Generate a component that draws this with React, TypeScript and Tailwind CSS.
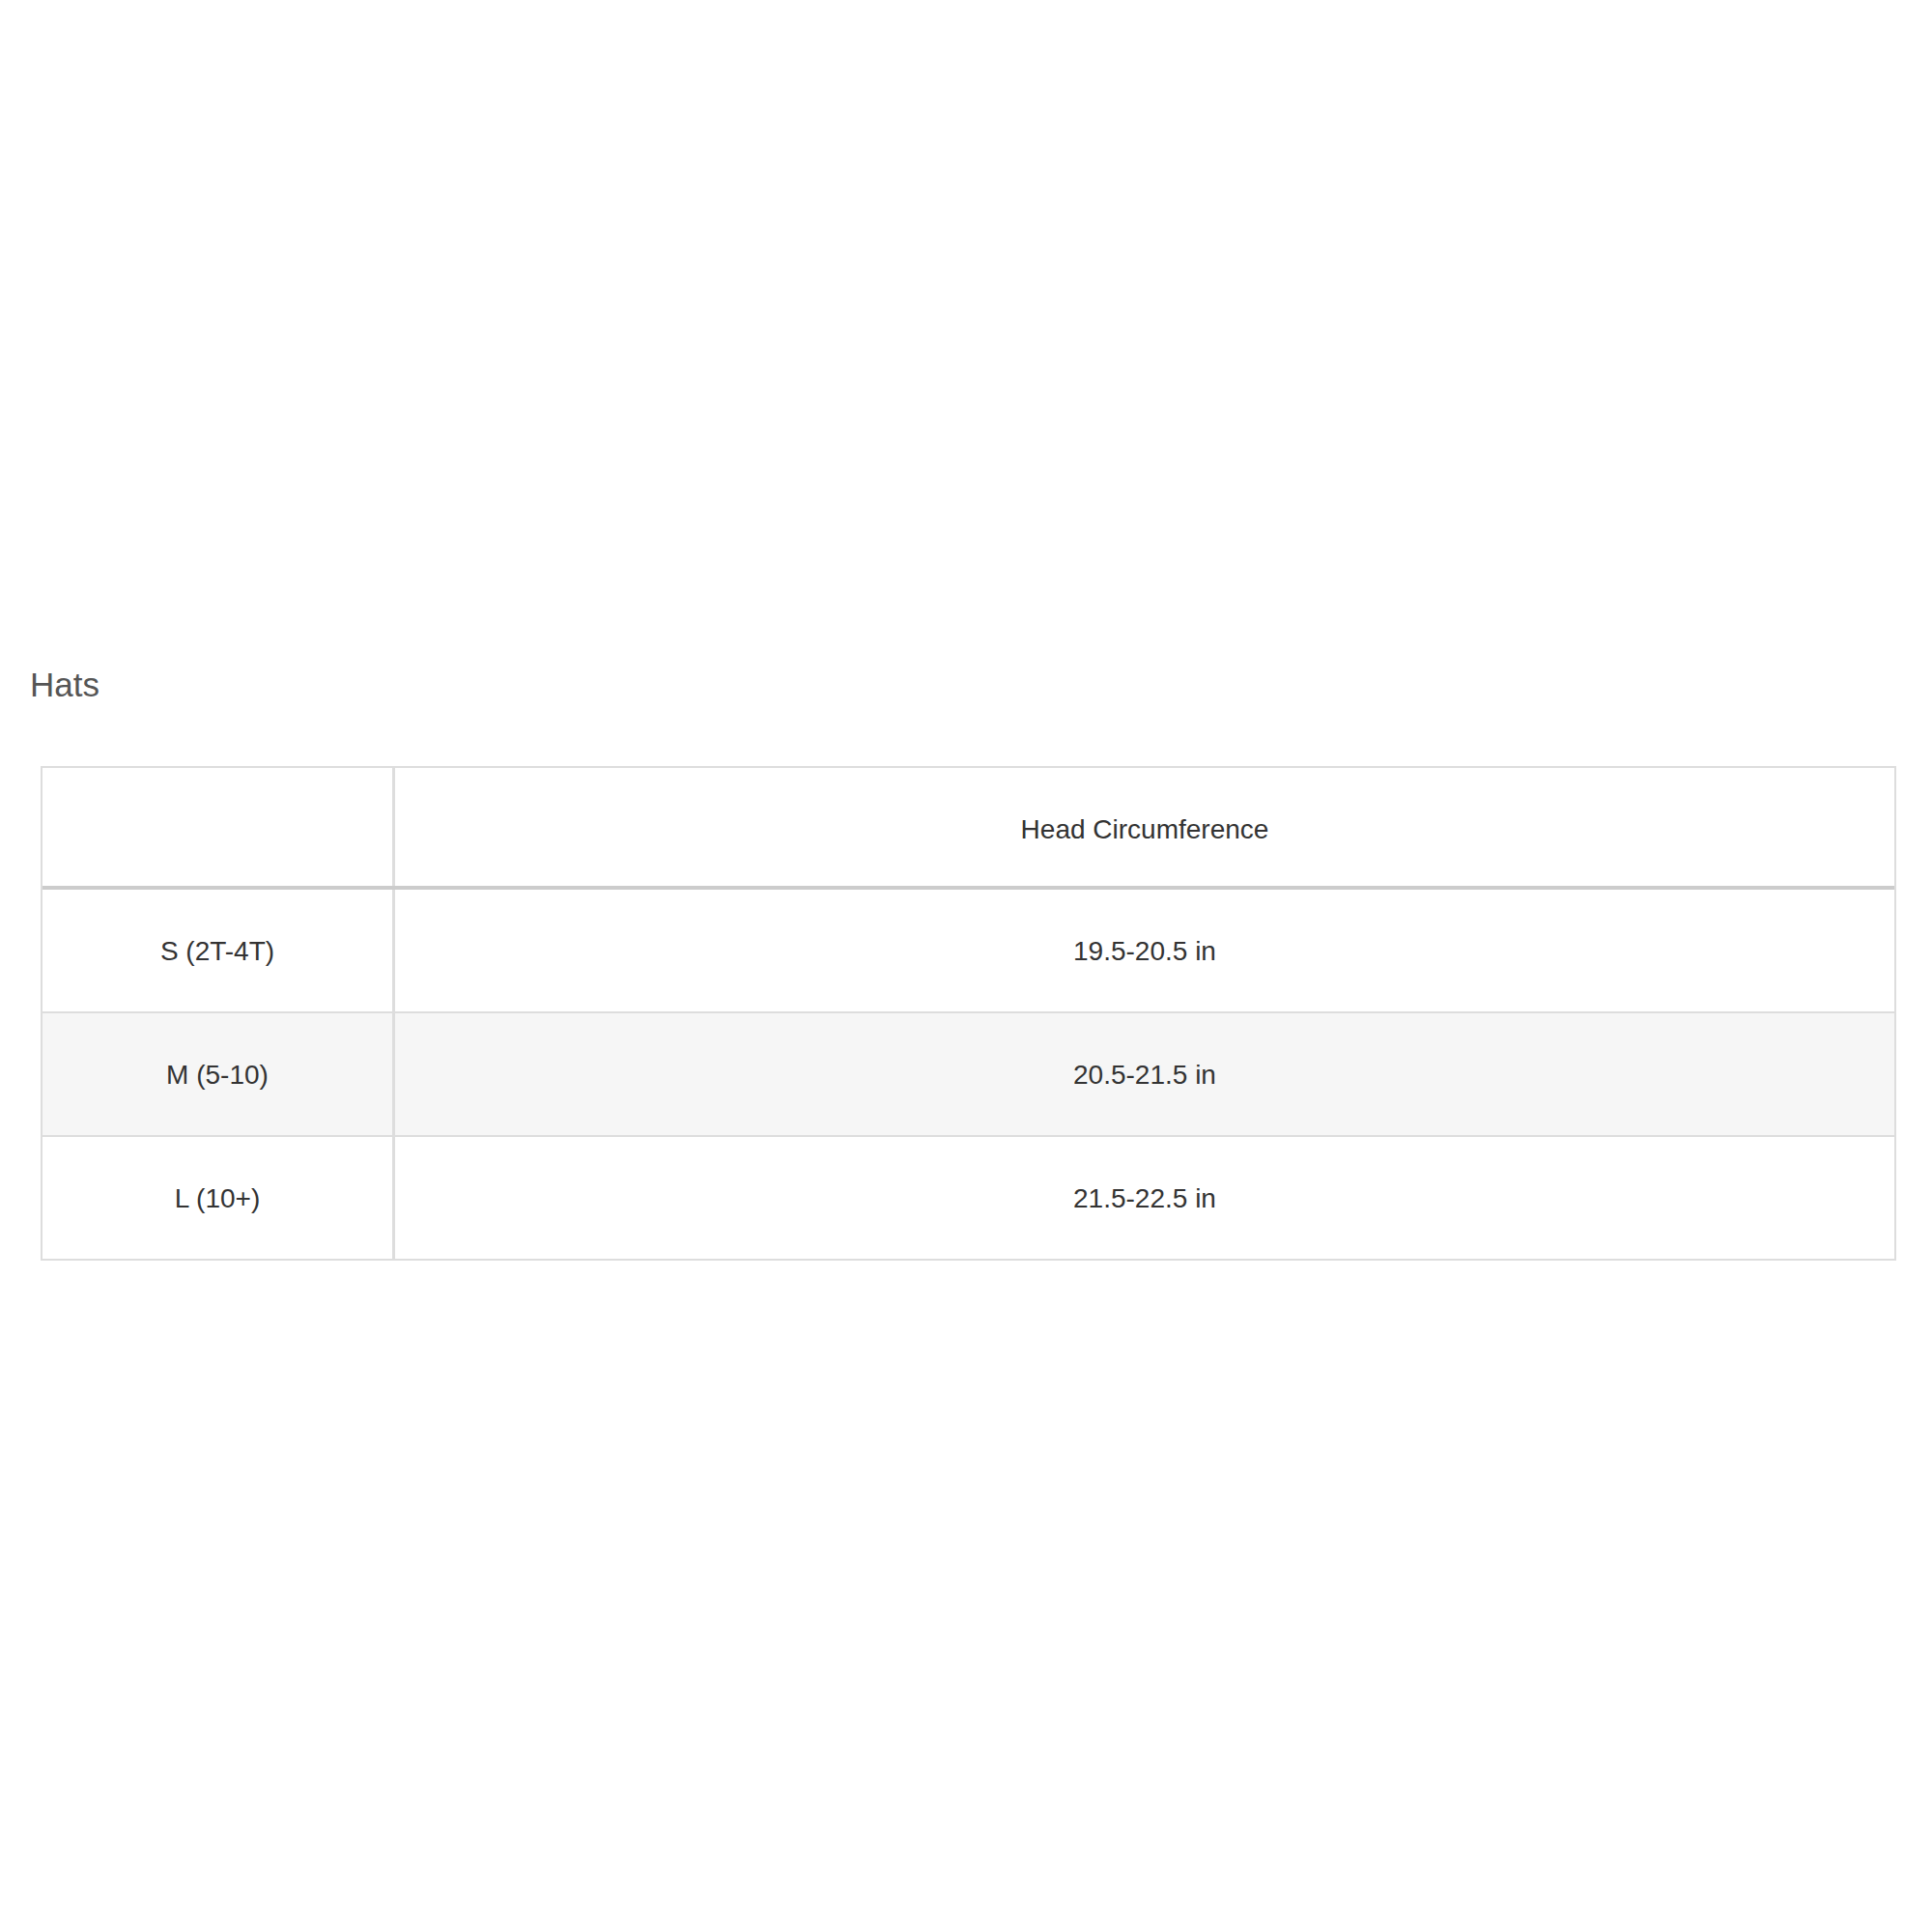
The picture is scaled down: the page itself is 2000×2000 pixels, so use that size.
const rows = [
  { size: 'S (2T-4T)', head: '19.5-20.5 in' },
  { size: 'M (5-10)', head: '20.5-21.5 in' },
  { size: 'L (10+)', head: '21.5-22.5 in' },
];

const App = () => {
  return (
    <div className="min-h-[2000px] w-[2000px] bg-white font-['Liberation_Sans',Arial,sans-serif]">
      <div className="pt-[688px] pl-[31px]">
        <h2 className="text-[35px] leading-[42px] font-normal text-[#555555]">Hats</h2>
      </div>

      <div className="mt-[63px] ml-[42px] w-[1921px] border-2 border-[#dddddd] text-[28px] text-[#333333]">
        {/* header */}
        <div className="grid grid-cols-[365px_1fr] border-b-4 border-[#cccccc]">
          <div className="h-[122px] border-r-[3px] border-[#dddddd]" />
          <div className="flex h-[122px] items-center justify-center pt-[6px]">Head Circumference</div>
        </div>

        {rows.map((row, i) => (
          <div
            key={row.size}
            className={`grid grid-cols-[365px_1fr] ${i % 2 === 1 ? 'bg-[#f6f6f6]' : 'bg-white'} ${
              i < rows.length - 1 ? 'border-b-2 border-[#dddddd]' : ''
            }`}
          >
            <div className="flex h-[126px] items-center justify-center border-r-[3px] border-[#dddddd] pt-[2px]">
              {row.size}
            </div>
            <div className="flex h-[126px] items-center justify-center pt-[2px]">{row.head}</div>
          </div>
        ))}
      </div>
    </div>
  );
};

export default App;
